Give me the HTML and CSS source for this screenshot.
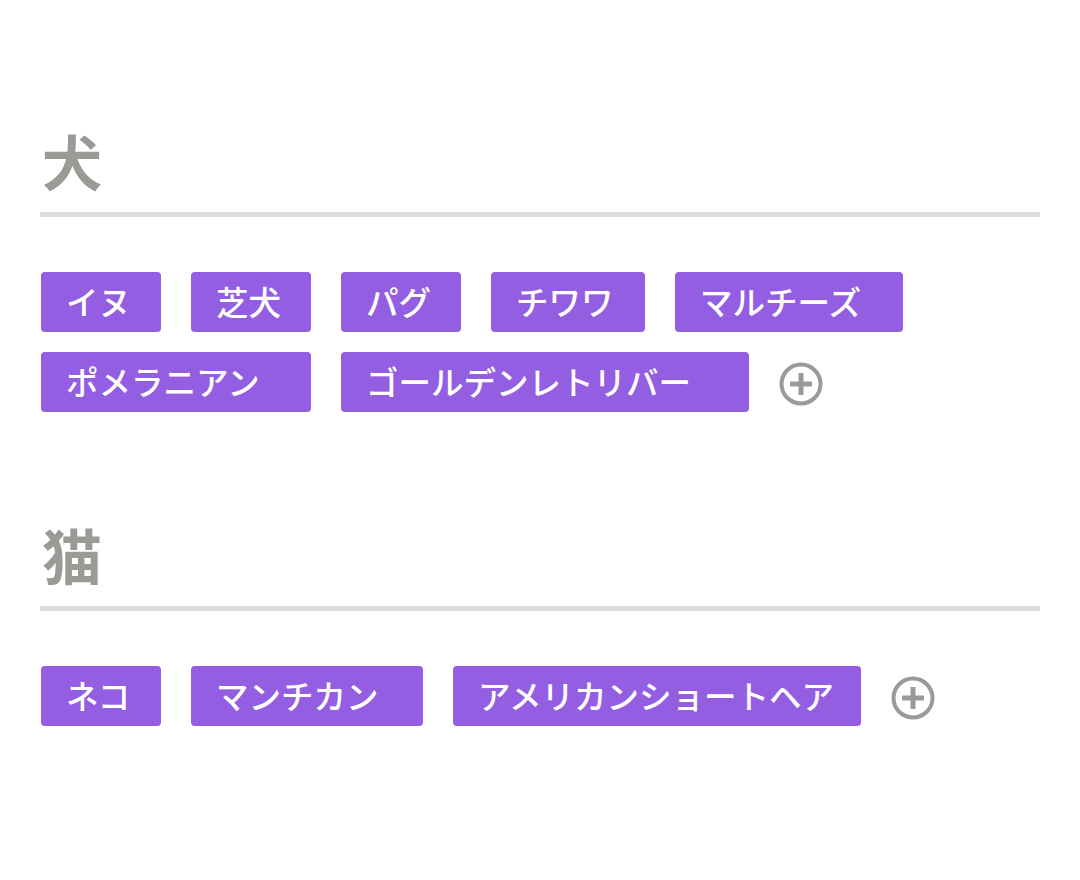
FILE: index.html
```html
<!DOCTYPE html>
<html lang="ja">
<head>
<meta charset="utf-8">
<title>タグ</title>
<link rel="stylesheet" href="styles.css">
</head>
<body>
<main class="page">
  <section class="group">
    <h2 class="group-title">犬</h2>
    <ul class="tags">
      <li class="tag w-120">イヌ</li>
      <li class="tag w-120">芝犬</li>
      <li class="tag w-120">パグ</li>
      <li class="tag w-154">チワワ</li>
      <li class="tag w-228">マルチーズ</li>
      <li class="tag w-270">ポメラニアン</li>
      <li class="tag w-408">ゴールデンレトリバー</li>
      <li class="add">
        <svg class="add-icon" viewBox="0 0 44 44" width="44" height="44" aria-label="追加">
          <circle cx="22" cy="22" r="19.5" fill="none" stroke="#9a9a96" stroke-width="4"/>
          <path d="M22 11v22M11 22h22" stroke="#9a9a96" stroke-width="5" fill="none"/>
        </svg>
      </li>
    </ul>
  </section>
  <section class="group">
    <h2 class="group-title">猫</h2>
    <ul class="tags">
      <li class="tag w-120">ネコ</li>
      <li class="tag w-232">マンチカン</li>
      <li class="tag w-408">アメリカンショートヘア</li>
      <li class="add">
        <svg class="add-icon" viewBox="0 0 44 44" width="44" height="44" aria-label="追加">
          <circle cx="22" cy="22" r="19.5" fill="none" stroke="#9a9a96" stroke-width="4"/>
          <path d="M22 11v22M11 22h22" stroke="#9a9a96" stroke-width="5" fill="none"/>
        </svg>
      </li>
    </ul>
  </section>
</main>
</body>
</html>
```

FILE: styles.css
```css
html, body {
  margin: 0;
  padding: 0;
  background: #ffffff;
}

body {
  font-family: "Noto Sans CJK JP", "Noto Sans", sans-serif;
}

.page {
  width: 1000px;
  padding: 120px 40px 40px;
  display: flex;
  flex-direction: column;
  gap: 102px;
}

.group {
  display: flex;
  flex-direction: column;
}

.group-title {
  margin: 0;
  font-size: 60px;
  font-weight: 700;
  line-height: 80px;
  color: #9a9a96;
  padding-left: 2px;
  padding-bottom: 12px;
  border-bottom: 5px solid #dcdcd8;
}

.tags {
  list-style: none;
  margin: 55px 0 0;
  padding: 0 0 0 1px;
  display: flex;
  flex-wrap: wrap;
  align-items: center;
  gap: 20px 30px;
}

.tag {
  box-sizing: border-box;
  height: 60px;
  padding: 0 0 3px 25px;
  display: flex;
  align-items: center;
  background: #935ee2;
  color: #ffffff;
  border-radius: 4px;
  font-size: 32.5px;
  font-weight: 500;
  white-space: nowrap;
}

.w-120 { width: 120px; }
.w-154 { width: 154px; }
.w-228 { width: 228px; }
.w-232 { width: 232px; }
.w-270 { width: 270px; }
.w-408 { width: 408px; }

.add {
  box-sizing: border-box;
  display: flex;
  align-items: center;
  height: 60px;
  padding-top: 3px;
}

.add-icon {
  display: block;
}
```
